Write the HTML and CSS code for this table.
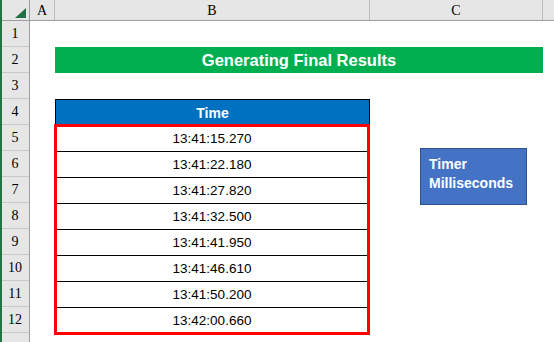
FILE: index.html
```html
<!DOCTYPE html>
<html>
<head>
<meta charset="utf-8">
<link rel="stylesheet" href="styles.css">
</head>
<body>
<div class="app">
  <div class="colhead">
    <div class="corner">
      <svg width="27" height="20" viewBox="0 0 27 20"><polygon points="24,8 24,18 13,18" fill="#217346"/></svg>
    </div>
    <div class="ch col-a">A</div>
    <div class="ch col-b">B</div>
    <div class="ch col-c">C</div>
    <div class="ch col-d"></div>
  </div>
  <div class="main">
    <div class="rowhead">
      <div class="rh">1</div><div class="rh">2</div><div class="rh">3</div><div class="rh">4</div>
      <div class="rh">5</div><div class="rh">6</div><div class="rh">7</div><div class="rh">8</div>
      <div class="rh">9</div><div class="rh">10</div><div class="rh">11</div><div class="rh">12</div>
      <div class="rh"></div>
    </div>
    <div class="sheet">
      <div class="spacer"></div>
      <div class="title">Generating Final Results</div>
      <div class="spacer"></div>
      <div class="tbl-head">Time</div>
      <div class="tbl-body">
        <div class="cell">13:41:15.270</div>
        <div class="cell">13:41:22.180</div>
        <div class="cell">13:41:27.820</div>
        <div class="cell">13:41:32.500</div>
        <div class="cell">13:41:41.950</div>
        <div class="cell">13:41:46.610</div>
        <div class="cell">13:41:50.200</div>
        <div class="cell">13:42:00.660</div>
      </div>
      <div class="shape">Timer<br>Milliseconds</div>
    </div>
  </div>
</div>
</body>
</html>
```
FILE: styles.css
```css
html, body {
  margin: 0;
  padding: 0;
  background: #ffffff;
}
.app {
  width: 554px;
  height: 342px;
  overflow: hidden;
  position: relative;
  display: flex;
  flex-direction: column;
  box-sizing: border-box;
  border-left: 2px solid #217346;
  font-family: "Liberation Sans", Arial, sans-serif;
}
.colhead {
  display: flex;
  height: 21px;
  background: #e6e6e6;
  border-bottom: 1px solid #9e9e9e;
  box-sizing: border-box;
  flex: none;
}
.corner {
  width: 28px;
  flex: none;
  box-sizing: border-box;
  border-right: 1px solid #9e9e9e;
  height: 20px;
}
.corner svg { display: block; }
.ch {
  flex: none;
  box-sizing: border-box;
  border-right: 1px solid #bcbcbc;
  height: 20px;
  line-height: 21px;
  text-align: center;
  font-family: "Liberation Serif", "Times New Roman", serif;
  font-size: 14px;
  color: #000;
}
.col-a { width: 25px; }
.col-b { width: 315px; }
.col-c { width: 173px; }
.col-d { flex: 1; border-right: none; }
.main {
  display: flex;
  flex: 1;
}
.rowhead {
  width: 28px;
  flex: none;
  background: #e6e6e6;
  box-sizing: border-box;
  border-right: 1px solid #9e9e9e;
}
.rh {
  height: 26px;
  box-sizing: border-box;
  border-bottom: 1px solid #c8c8c8;
  text-align: center;
  line-height: 26px;
  font-family: "Liberation Serif", "Times New Roman", serif;
  font-size: 14px;
  color: #000;
  padding-right: 1px;
}
.sheet {
  flex: 1;
  position: relative;
  background: #fff;
}
.spacer { height: 26px; }
.title {
  margin-left: 25px;
  width: 488px;
  height: 26px;
  background: #00b050;
  color: #fff;
  font-weight: bold;
  font-size: 16.5px;
  line-height: 27px;
  text-align: center;
}
.tbl-head {
  margin-left: 25px;
  width: 315px;
  height: 26px;
  box-sizing: border-box;
  background: #0070c0;
  border: 1px solid #000;
  border-bottom: none;
  color: #fff;
  font-weight: bold;
  font-size: 14px;
  line-height: 26px;
  text-align: center;
}
.tbl-body {
  margin-left: 24px;
  margin-top: -1px;
  width: 316px;
  box-sizing: border-box;
  border: 3px solid #ff0000;
}
.cell {
  height: 26px;
  box-sizing: border-box;
  border-bottom: 1px solid #000;
  text-align: center;
  font-size: 13.5px;
  line-height: 26px;
  color: #000;
}
.cell:first-child {
  height: 25px;
  line-height: 24px;
}
.cell:last-child {
  height: 24px;
  border-bottom: none;
  line-height: 25px;
}
.shape {
  position: absolute;
  left: 390px;
  top: 127px;
  width: 107px;
  height: 57px;
  box-sizing: border-box;
  background: #4472c4;
  border: 1px solid #2f528f;
  color: #fff;
  font-weight: bold;
  font-size: 14px;
  line-height: 19px;
  padding: 6px 0 0 8px;
}
```
